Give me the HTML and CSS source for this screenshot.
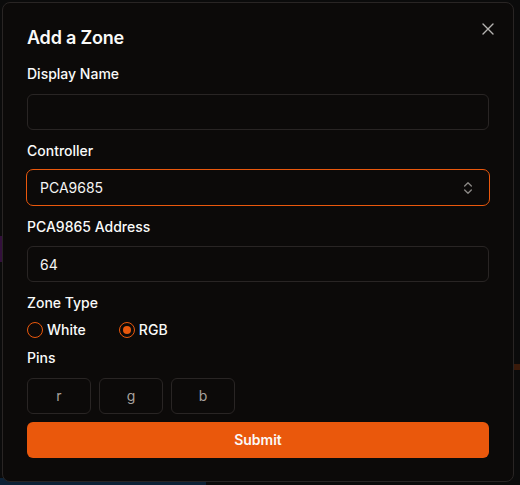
FILE: index.html
```html
<!DOCTYPE html>
<html lang="en">
<head>
<meta charset="utf-8">
<title>Add a Zone</title>
<link rel="stylesheet" href="styles.css">
</head>
<body>
<div class="bg-purple"></div>
<div class="bg-orange"></div>
<div class="bg-blue"></div>
<div class="stage">
  <div class="dialog" role="dialog">
    <h2 class="title">Add a Zone</h2>
    <button class="close" aria-label="Close">
      <svg width="12" height="12" viewBox="0 0 12 12" fill="none" stroke="currentColor" stroke-width="1.4" stroke-linecap="round"><path d="M1 1 11 11M11 1 1 11"/></svg>
    </button>
    <form class="form">
      <label class="label">Display Name</label>
      <div class="input g1"></div>

      <label class="label l2">Controller</label>
      <div class="select">
        <span>PCA9685</span>
        <svg class="chev" width="16" height="16" viewBox="0 0 24 24" fill="none" stroke="currentColor" stroke-width="2" stroke-linecap="round" stroke-linejoin="round"><path d="m7 15 5 5 5-5"/><path d="m7 9 5-5 5 5"/></svg>
      </div>

      <label class="label l3">PCA9865 Address</label>
      <div class="input g3"><span>64</span></div>

      <label class="label l4">Zone Type</label>
      <div class="radios">
        <div class="radio-item"><span class="radio"></span><span class="rlabel">White</span></div>
        <div class="radio-item"><span class="radio checked"></span><span class="rlabel">RGB</span></div>
      </div>

      <label class="label l5">Pins</label>
      <div class="pins">
        <div class="pin">r</div>
        <div class="pin">g</div>
        <div class="pin">b</div>
      </div>

      <button type="button" class="submit">Submit</button>
    </form>
  </div>
</div>
</body>
</html>
```

FILE: styles.css
```css
* { box-sizing: border-box; }
html, body { margin: 0; padding: 0; }
body {
  width: 520px;
  height: 485px;
  background: #0b0b0b;
  font-family: Inter, "Noto Sans", "Liberation Sans", sans-serif;
  color: #fafaf9;
  overflow: hidden;
  position: relative;
}
.bg-purple { position: absolute; left: 0; top: 236px; width: 3px; height: 26px; background: #33103c; }
.bg-orange { position: absolute; right: 0; top: 364px; width: 7px; height: 6px; background: #3a1a0a; }
.bg-blue { position: absolute; left: 0; top: 478px; width: 206px; height: 7px; background: #0d2236; }
.stage { padding: 2px 0 0 2px; position: relative; }
.dialog {
  position: relative;
  width: 512px;
  background: #0c0a09;
  border: 1px solid #292524;
  border-radius: 8px;
  padding: 24px 24px 23px;
}
.title {
  margin: 2px 0 17px;
  font-size: 18px;
  line-height: 18px;
  font-weight: 600;
  letter-spacing: -0.2px;
}
.close {
  position: absolute;
  top: 19px;
  right: 18px;
  width: 14px;
  height: 14px;
  padding: 1px;
  border: 0;
  background: transparent;
  color: #b5b3b1;
  display: flex;
  align-items: center;
  justify-content: center;
}
.form { display: flex; flex-direction: column; }
.label {
  font-size: 14px;
  line-height: 20px;
  font-weight: 500;
  margin-bottom: 10px;
}
.l2, .l3 { margin-top: 11px; }
.l2 { margin-bottom: 8px; }
.l3 { margin-bottom: 9px; }
.l4 { margin-top: 10.5px; margin-bottom: 9.5px; }
.l5 { margin-top: 10px; margin-bottom: 9.5px; }
.input {
  height: 36px;
  border: 1px solid #292524;
  border-radius: 6px;
  padding: 0 12px;
  display: flex;
  align-items: center;
  font-size: 14px;
  color: #f5f5f4;
}
.select {
  height: 37px;
  margin: 0 -1px;
  border: 1px solid #ea580c;
  border-radius: 7px;
  padding: 0 13px 0 13px;
  display: flex;
  align-items: center;
  justify-content: space-between;
  font-size: 14px;
  color: #f5f5f4;
}
.chev { color: #8a8784; }
.radios {
  display: flex;
  gap: 33px;
  height: 16px;
  align-items: center;
}
.radio-item { display: flex; align-items: center; gap: 4px; }
.radio {
  width: 16px;
  height: 16px;
  border: 1px solid #ea580c;
  border-radius: 50%;
  display: flex;
  align-items: center;
  justify-content: center;
}
.radio.checked::after {
  content: "";
  width: 8px;
  height: 8px;
  border-radius: 50%;
  background: #ea580c;
}
.rlabel { font-size: 14px; font-weight: 500; line-height: 16px; }
.pins { display: flex; gap: 8px; }
.pin {
  width: 64px;
  height: 36px;
  border: 1px solid #292524;
  border-radius: 6px;
  display: flex;
  align-items: center;
  justify-content: center;
  font-size: 14px;
  color: #a8a29e;
}
.submit {
  margin-top: 8px;
  height: 36px;
  border: 0;
  border-radius: 6px;
  background: #ea580c;
  color: #fafaf9;
  font-family: inherit;
  font-size: 14px;
  font-weight: 600;
}
```
